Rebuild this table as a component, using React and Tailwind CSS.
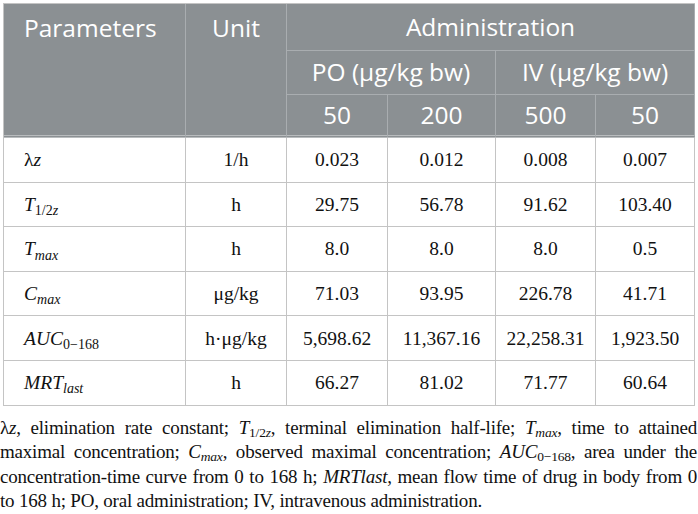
const rows = [
  {
    param: (
      <>
        λ<i>z</i>
      </>
    ),
    unit: '1/h',
    vals: ['0.023', '0.012', '0.008', '0.007'],
  },
  {
    param: (
      <>
        <i>T</i>
        <sub className="text-[14px] -bottom-[0.3em]">
          1/2<i>z</i>
        </sub>
      </>
    ),
    unit: 'h',
    vals: ['29.75', '56.78', '91.62', '103.40'],
  },
  {
    param: (
      <>
        <i>T</i>
        <sub className="text-[14px] -bottom-[0.3em]">
          <i>max</i>
        </sub>
      </>
    ),
    unit: 'h',
    vals: ['8.0', '8.0', '8.0', '0.5'],
  },
  {
    param: (
      <>
        <i>C</i>
        <sub className="text-[14px] -bottom-[0.3em]">
          <i>max</i>
        </sub>
      </>
    ),
    unit: 'μg/kg',
    vals: ['71.03', '93.95', '226.78', '41.71'],
  },
  {
    param: (
      <>
        <i>AUC</i>
        <sub className="text-[14px] -bottom-[0.3em]">0−168</sub>
      </>
    ),
    unit: 'h·μg/kg',
    vals: ['5,698.62', '11,367.16', '22,258.31', '1,923.50'],
  },
  {
    param: (
      <>
        <i>MRT</i>
        <sub className="text-[14px] -bottom-[0.3em]">
          <i>last</i>
        </sub>
      </>
    ),
    unit: 'h',
    vals: ['66.27', '81.02', '71.77', '60.64'],
  },
];

const th = 'border-r border-b border-[#a9adb0] bg-clip-padding font-normal text-white';
const thLast = 'border-b-[3px] border-double border-b-[#b9bcbe]';
const td = 'border-r border-b border-[#c4c4c4] text-center';

export default function App() {
  return (
    <div className="w-[698px] h-[514px] bg-white overflow-hidden">
      <div className="pl-[3px] pt-[3px]">
        <table className="w-[691px] table-fixed border-separate border-spacing-0 border-l border-t border-[#c4c4c4]">
          <colgroup>
            <col className="w-[182px]" />
            <col className="w-[101px]" />
            <col className="w-[101px]" />
            <col className="w-[108px]" />
            <col className="w-[100px]" />
            <col className="w-[99px]" />
          </colgroup>
          <thead className="bg-[#8b9093] font-['Open_Sans',sans-serif] text-[24.5px] leading-none">
            <tr className="h-[47px]">
              <th rowSpan={3} className={`${th} ${thLast} align-top text-left pl-[20px] pt-[12px]`}>
                Parameters
              </th>
              <th rowSpan={3} className={`${th} ${thLast} align-top text-center pt-[12px]`}>
                Unit
              </th>
              <th colSpan={4} className={`${th} text-center`}>
                Administration
              </th>
            </tr>
            <tr className="h-[44px]">
              <th colSpan={2} className={`${th} text-center`}>
                PO (μg/kg bw)
              </th>
              <th colSpan={2} className={`${th} text-center`}>
                IV (μg/kg bw)
              </th>
            </tr>
            <tr className="h-[43px]">
              {['50', '200', '500', '50'].map((v, i) => (
                <th key={i} className={`${th} ${thLast} text-center`}>
                  {v}
                </th>
              ))}
            </tr>
          </thead>
          <tbody className="font-['Liberation_Serif',serif] text-[19.5px] text-[#111]">
            {rows.map((r, i) => (
              <tr key={i} className="h-[44.6px]">
                <td className={`${td} !text-left pl-[20px]`}>{r.param}</td>
                <td className={td}>{r.unit}</td>
                {r.vals.map((v, j) => (
                  <td key={j} className={td}>
                    {v}
                  </td>
                ))}
              </tr>
            ))}
          </tbody>
        </table>
      </div>
      <div className="mt-[10px] font-['Liberation_Serif',serif] text-[19px] tracking-[-0.2px] leading-[24.5px] text-[#111] w-[697px]">
        <div className="text-justify [text-align-last:justify] whitespace-nowrap">
          λ<i>z</i>, elimination rate constant; <i>T</i>
          <sub className="text-[13.5px]">
            1/2<i>z</i>
          </sub>
          , terminal elimination half-life; <i>T</i>
          <sub className="text-[13.5px]">
            <i>max</i>
          </sub>
          , time to attained
        </div>
        <div className="text-justify [text-align-last:justify] whitespace-nowrap">
          maximal concentration; <i>C</i>
          <sub className="text-[13.5px]">
            <i>max</i>
          </sub>
          , observed maximal concentration; <i>AUC</i>
          <sub className="text-[13.5px]">0−168</sub>, area under the
        </div>
        <div className="text-justify [text-align-last:justify] whitespace-nowrap">
          concentration-time curve from 0 to 168 h; <i>MRTlast</i>, mean flow time of drug in body from 0
        </div>
        <div>to 168 h; PO, oral administration; IV, intravenous administration.</div>
      </div>
    </div>
  );
}
